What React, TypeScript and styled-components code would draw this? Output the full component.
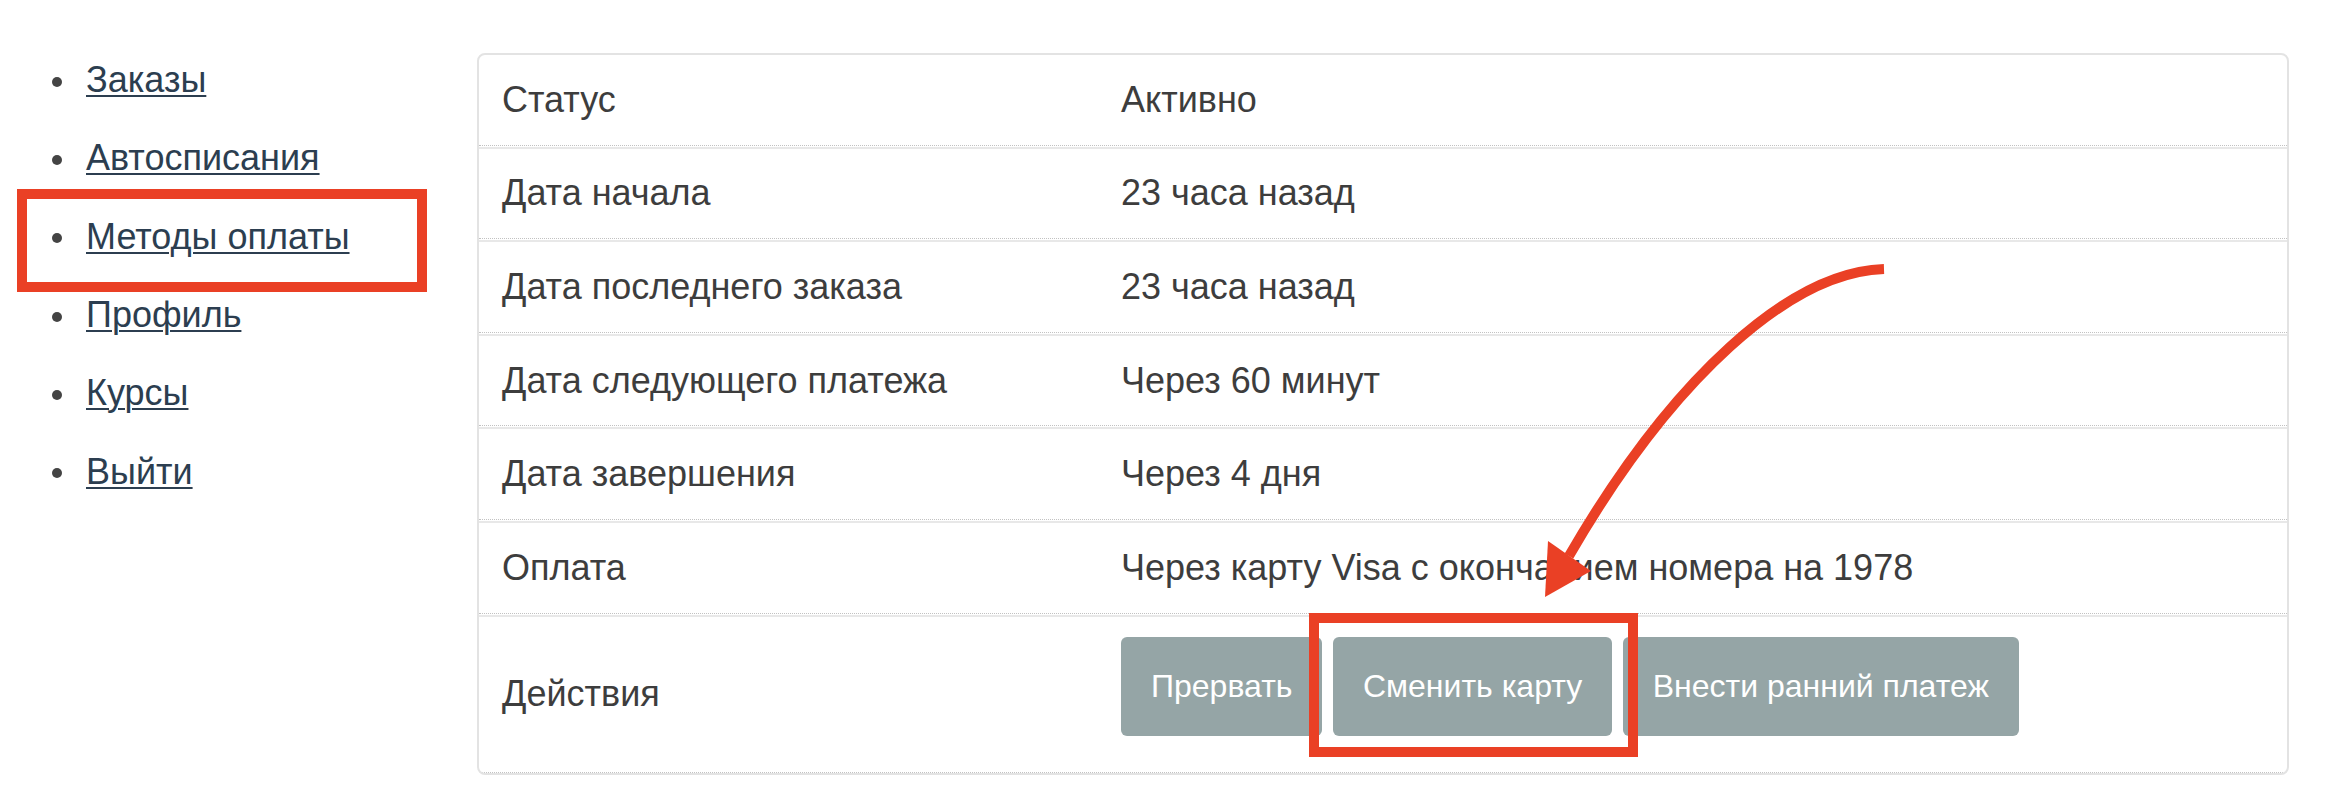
import React from "react";
import styled, { createGlobalStyle } from "styled-components";

const GlobalStyle = createGlobalStyle`
  html, body { margin: 0; padding: 0; background: #ffffff; }
  body { font-family: "Liberation Sans", Arial, Helvetica, sans-serif; }
  * { box-sizing: border-box; }
`;

const Page = styled.div`
  position: relative;
  width: 2332px;
  height: 804px;
  display: flex;
  align-items: flex-start;
  padding-top: 53px;
  padding-right: 43px;
`;

const Sidebar = styled.nav`
  width: 477px;
  flex: none;
`;

const NavList = styled.ul`
  list-style: none;
  margin: -12px 0 0 0;
  padding: 0 0 0 52px;
`;

const NavItem = styled.li`
  display: flex;
  align-items: center;
  height: 78.3px;
  font-size: 36px;
  line-height: 78px;
`;

const Bullet = styled.span`
  width: 10px;
  height: 10px;
  border-radius: 50%;
  background: #444444;
  margin-right: 24px;
  margin-top: 3px;
  flex: none;
`;

const NavLink = styled.a`
  color: #2c3e50;
  text-decoration: underline;
  text-decoration-thickness: 2px;
  text-underline-offset: 3px;
  cursor: pointer;
`;

const Panel = styled.section`
  flex: 1;
  border: 2px solid #e3e3e3;
  border-radius: 8px;
  background: #ffffff;
  overflow: hidden;
`;

const Row = styled.div`
  display: grid;
  grid-template-columns: 619px 1fr;
  border-bottom: 1px dotted #c2c2c2;
  & + & {
    margin-top: 1px;
    border-top: 2px solid #e8e8e8;
  }
`;

const Cell = styled.div<{ $buttons?: boolean; $tall?: boolean }>`
  display: flex;
  align-items: ${(p) => (p.$buttons ? "flex-start" : "center")};
  min-height: ${(p) => (p.$tall ? "155px" : "89.6px")};
  padding: ${(p) => (p.$buttons ? "20px 23px 34px" : "0 23px")};
  font-size: 36px;
  color: #3d3d3d;
  gap: 10.5px;
`;

const ActionButton = styled.button`
  height: 99px;
  padding: 0 30px;
  border: none;
  border-radius: 6px;
  background: #95a5a6;
  color: #ffffff;
  font-family: "Liberation Sans", Arial, Helvetica, sans-serif;
  font-size: 32px;
  cursor: pointer;
`;

const Annotations = styled.svg`
  position: absolute;
  left: 0;
  top: 0;
  pointer-events: none;
`;

const navItems = ["Заказы", "Автосписания", "Методы оплаты", "Профиль", "Курсы", "Выйти"];

const rows: [string, string][] = [
  ["Статус", "Активно"],
  ["Дата начала", "23 часа назад"],
  ["Дата последнего заказа", "23 часа назад"],
  ["Дата следующего платежа", "Через 60 минут"],
  ["Дата завершения", "Через 4 дня"],
  ["Оплата", "Через карту Visa с окончанием номера на 1978"],
];

export default function App() {
  return (
    <>
      <GlobalStyle />
      <Page>
        <Sidebar>
          <NavList>
            {navItems.map((item) => (
              <NavItem key={item}>
                <Bullet />
                <NavLink>{item}</NavLink>
              </NavItem>
            ))}
          </NavList>
        </Sidebar>
        <Panel>
          {rows.map(([label, value]) => (
            <Row key={label}>
              <Cell>{label}</Cell>
              <Cell>{value}</Cell>
            </Row>
          ))}
          <Row>
            <Cell $tall>Действия</Cell>
            <Cell $tall $buttons>
              <ActionButton>Прервать</ActionButton>
              <ActionButton>Сменить карту</ActionButton>
              <ActionButton>Внести ранний платеж</ActionButton>
            </Cell>
          </Row>
        </Panel>
        <Annotations width="2332" height="804" viewBox="0 0 2332 804">
          <rect x="22" y="194" width="400" height="93" fill="none" stroke="#ea4025" strokeWidth="10" />
          <rect x="1314" y="618" width="319" height="134" fill="none" stroke="#ea4025" strokeWidth="10" />
          <path
            d="M 1884 269 C 1790 272, 1672 378, 1569 556"
            fill="none"
            stroke="#ea4025"
            strokeWidth="10"
          />
          <polygon points="1545,597 1548,541 1591,571" fill="#ea4025" />
        </Annotations>
      </Page>
    </>
  );
}
